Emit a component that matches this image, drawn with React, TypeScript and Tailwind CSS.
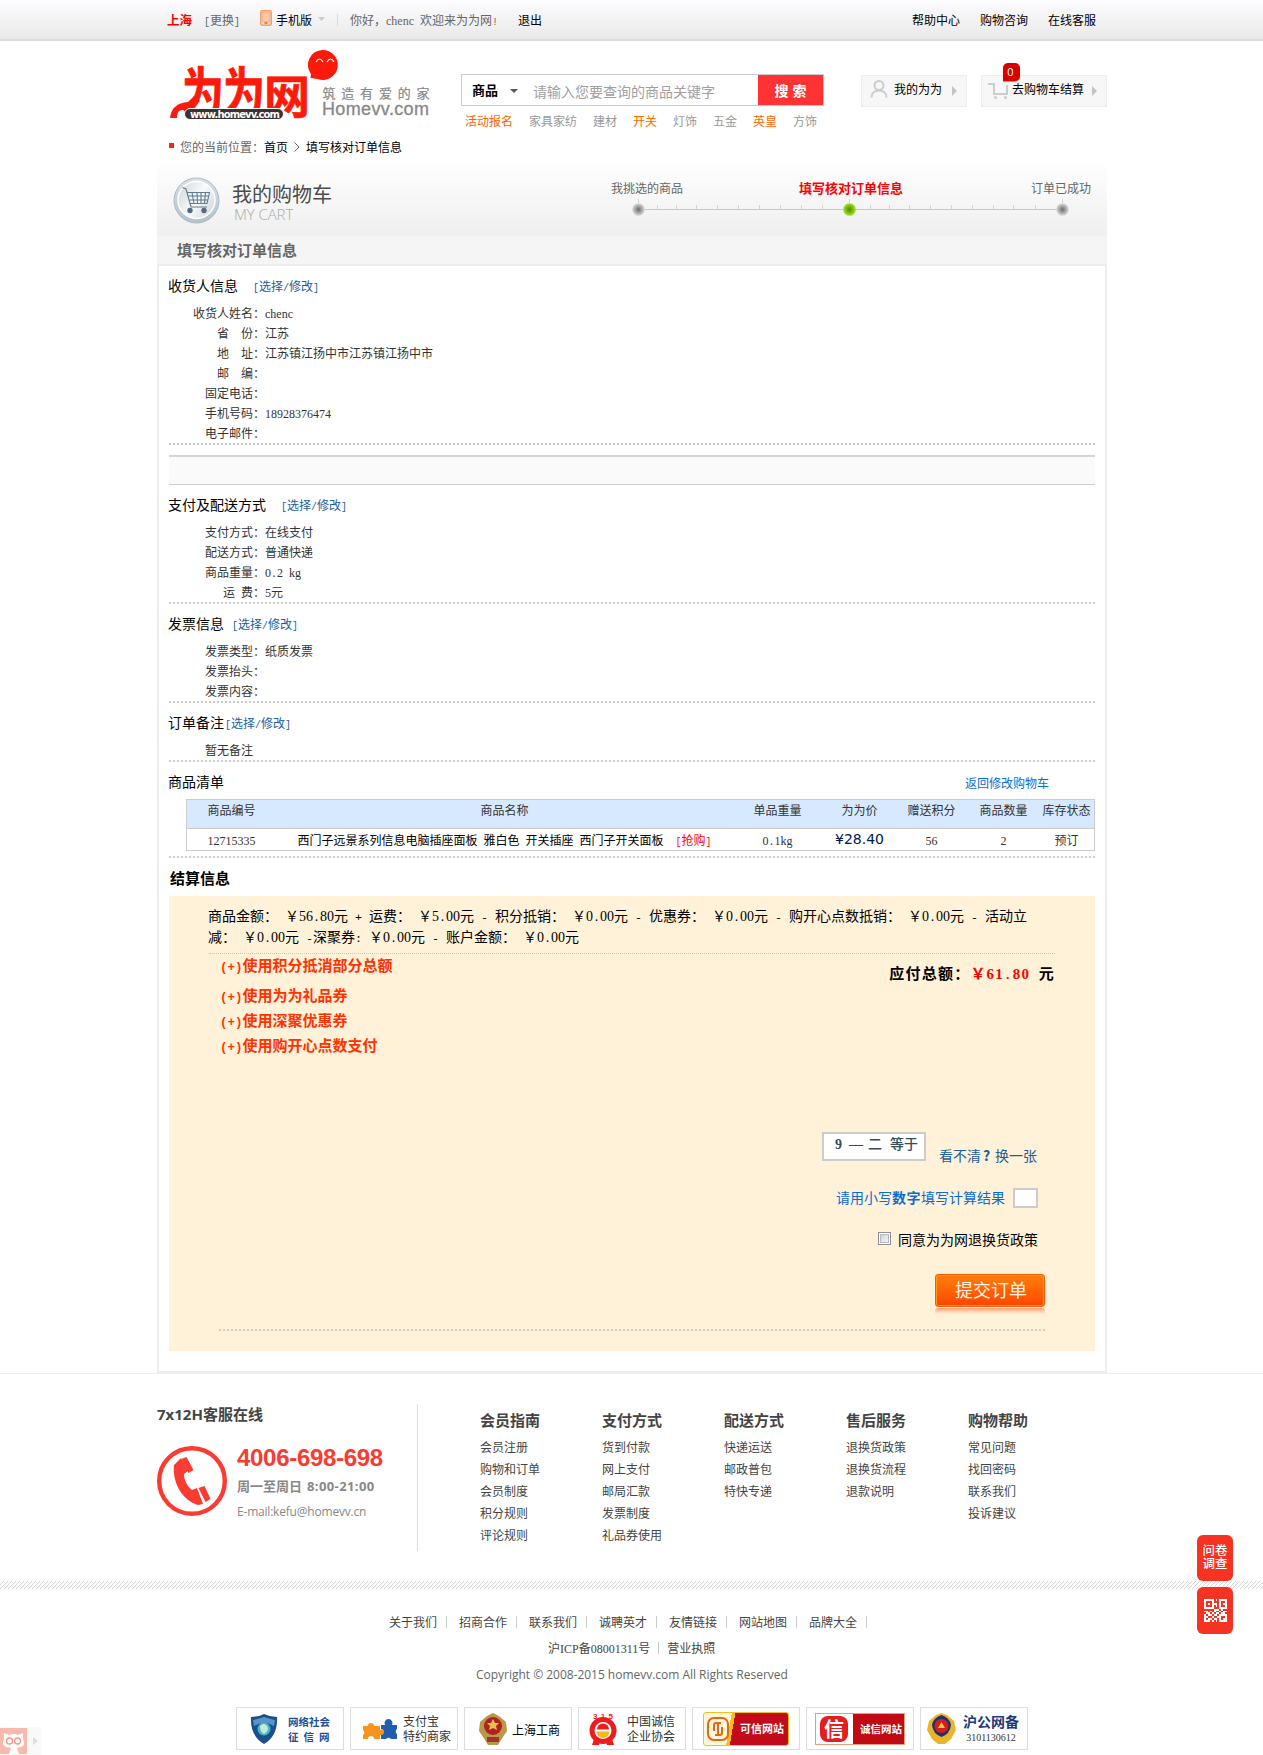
import React from "react";

const CJK = "font-['Noto_Sans_CJK_SC',sans-serif]";

/* Half-width characters take about half an em, full-width ones a whole em. */
function T({ children }: { children: string }) {
  const runs = children.match(/[0-9A-Za-z]+|[^0-9A-Za-z\u0080-\uffff]+|[\u0080-\uffff]+/g) || [];
  return (
    <span className="whitespace-pre">
      {runs.map((r, i) =>
        /^[0-9A-Za-z]/.test(r) ? (
          <span key={i} className="font-['Liberation_Serif',serif] leading-none">{r}</span>
        ) : /^[\u0080-\uffff]/.test(r) ? (
          <React.Fragment key={i}>{r}</React.Fragment>
        ) : (
          <span key={i} className="font-['Liberation_Mono',monospace] text-[0.8333em] leading-none">{r}</span>
        )
      )}
    </span>
  );
}

function TopBar() {
  return (
    <div className="flex h-[41px] items-center border-b-2 border-[#dcdcdf] bg-gradient-to-b from-[#fdfcfe] to-[#e9e9ea] pl-[167px] text-[#666]">
      <b className="w-[37px] text-[12.5px] text-[#f00]">上海</b>
      <span className="w-[56px]"><T>[更换]</T></span>
      <svg width="12" height="16" viewBox="0 0 12 16" className="mb-1">
        <rect x="0.75" y="0.75" width="10.5" height="14.5" rx="1.5" fill="#fcd9c0" stroke="#f5a06c" strokeWidth="1.5" />
        <rect x="2.5" y="2.5" width="7" height="9" fill="#fbc9a8" stroke="#f5a06c" strokeWidth="0.6" />
        <rect x="4.5" y="12" width="3" height="2" fill="#f08040" />
      </svg>
      <span className="ml-[4px] text-black">手机版</span>
      <svg width="7" height="4" className="mb-[2px] ml-[6px]"><path d="M0 0H7L3.5 4Z" fill="#ccc" /></svg>
      <i className="ml-[12px] h-3 w-px bg-[#d5dcde]" />
      <span className="ml-[12px] w-[168px]"><T>你好，chenc 欢迎来为为网!</T></span>
      <span className="w-[394px] text-black">退出</span>
      <div className="flex gap-5 text-black">
        <span>帮助中心</span>
        <span>购物咨询</span>
        <span>在线客服</span>
      </div>
    </div>
  );
}

function Logo() {
  return (
    <svg width="265" height="76" viewBox="168 48 265 76">
      <g fill="#fd1a0b" stroke="#fd1a0b" strokeWidth="0.700" fontWeight="700" fontFamily="'Noto Sans CJK SC',sans-serif">
        <text transform="translate(182 111) scale(1 1.25)" fontSize="42" textLength="83">为为</text>
        <text x="264" y="113" fontSize="46">网</text>
      </g>
      <path d="M170 118c1-10 7-15 18-16l6-6 6 5-9 9h-8c-5 0-6 3-6 8z" fill="#fd1a0b" />
      <rect x="184.500" y="108.500" width="99" height="11" rx="5.500" fill="#3b3232" stroke="#fff" />
      <text x="190" y="117.500" fill="#fff" fontSize="10" fontWeight="700" textLength="90" fontFamily="'DejaVu Sans',sans-serif">www.homevv.com</text>
      <path d="M322.500 50a15 15 0 1 1-5 29l-7 -1 0.500-4A15 15 0 0 1 322.500 50z" fill="#fd1a0b" />
      <path d="M316 62q3.500-6 7 0M327 62q3.500-6 7 0" fill="none" stroke="#fff" strokeWidth="1.200" />
      <text x="322.500" y="97.500" fill="#888" fontSize="13" textLength="107" stroke="#888" strokeWidth="0.200" fontFamily="'Noto Sans CJK SC',sans-serif">筑造有爱的家</text>
      <text x="322" y="114.500" fill="#888" stroke="#888" strokeWidth="0.300" fontSize="18" textLength="107" fontFamily="'Liberation Sans',sans-serif">Homevv.com</text>
    </svg>
  );
}

const hot: [string, boolean][] = [
  ["活动报名", true], ["家具家纺", false], ["建材", false], ["开关", true],
  ["灯饰", false], ["五金", false], ["英皇", true], ["方饰", false],
];

function Header() {
  return (
    <div className="flex h-[89px] items-start pl-[168px]">
      <div className="mt-[7px] w-[293px]"><Logo /></div>
      <div className="mt-[33px] w-[363px]">
        <div className="flex h-8 items-center border border-[#ccc]">
          <b className="ml-[10px] w-[38px] text-[13px] text-black">商品</b>
          <svg width="8" height="4" className="mt-px"><path d="M0 0H8L4 4Z" fill="#555" /></svg>
          <span className="ml-[15px] mt-[2px] flex-1 text-[14px] text-[#a0a0a0]">请输入您要查询的商品关键字</span>
          <b className="flex h-[30px] w-[65px] items-center justify-center bg-[#f33] text-[14px] text-white">搜<span className="w-1" />索</b>
        </div>
        <div className="ml-[4px] mt-[5px] flex h-5 items-center gap-4">
          {hot.map(([t, on]) => (
            <span key={t} className={on ? "text-[#f60]" : "text-[#999]"}>{t}</span>
          ))}
        </div>
      </div>
      <div className="ml-[37px] mt-[34px] flex h-8 w-[106px] items-center border border-[#eee] bg-[#f7f7f7] text-black">
        <svg width="18" height="18" viewBox="0 0 18 18" fill="none" stroke="#ccc" strokeWidth="2" className="mb-1 ml-2">
          <circle cx="9" cy="5.500" r="4.500" />
          <path d="M1.500 17.500C1.500 13 5 10.500 9 10.500S16.500 13 16.500 17.500" />
        </svg>
        <span className="-mt-1 ml-[6px]">我的为为</span>
        <svg width="5" height="10" className="ml-[10px]"><path d="M0 0L5 5L0 10Z" fill="#c4c4c4" /></svg>
      </div>
      <div className="relative ml-[14px] mt-[34px] flex h-8 w-[126px] items-center border border-[#eee] bg-[#f7f7f7] text-black">
        <svg width="21" height="17" viewBox="0 0 21 17" fill="none" stroke="#ccc" strokeWidth="2" className="mb-px ml-[6px]">
          <path d="M0 2H6V12H19V3" />
          <circle cx="7.500" cy="15.500" r="1.500" fill="#ccc" stroke="none" />
          <circle cx="17.500" cy="15.500" r="1.500" fill="#ccc" stroke="none" />
        </svg>
        <span className="-mt-1 ml-[3px]">去购物车结算</span>
        <svg width="5" height="10" className="ml-[8px]"><path d="M0 0L5 5L0 10Z" fill="#c4c4c4" /></svg>
        <span className="absolute left-[21px] top-[-13px] flex h-[18px] w-[17px] items-center justify-center rounded-[5px] rounded-bl-none bg-[#d90000] pr-[2px] font-['Open_Sans',sans-serif] text-[11px] text-white shadow-[0_1px_1px_#999]">0</span>
      </div>
    </div>
  );
}

function Crumbs() {
  return (
    <div className="flex h-[30px] items-center pl-[169px] pt-[3px] text-[#666]">
      <i className="mb-[3px] h-[5px] w-[5px] bg-[#f3290f]" />
      <span className="ml-[6px]">您的当前位置：</span>
      <span className="text-black">首页</span>
      <svg width="6" height="10" fill="none" stroke="#666" className="mx-[6px]"><path d="M0.500 0.500L5 5L0.500 9.500" /></svg>
      <span className="text-black">填写核对订单信息</span>
    </div>
  );
}

const ticks = [657, 676, 696, 717, 738, 759, 780, 801, 822, 870, 889, 909, 930, 951, 972, 993, 1013, 1035];

function CartHeader() {
  return (
    <>
      <div className="flex h-[76px] bg-gradient-to-b from-white to-[#efefef] pl-[14px]">
        <svg width="50" height="50" viewBox="0 0 50 50" className="mt-[15px]">
          <defs>
            <linearGradient id="ring" x1="0" y1="0" x2="0" y2="1">
              <stop offset="0" stopColor="#dbe3e8" /><stop offset="1" stopColor="#b4c2cb" />
            </linearGradient>
            <linearGradient id="disc" x1="0" y1="0" x2="1" y2="0.600">
              <stop offset="0" stopColor="#cfd4d7" /><stop offset="0.600" stopColor="#f8fafa" /><stop offset="1" stopColor="#d8dee2" />
            </linearGradient>
          </defs>
          <circle cx="25.500" cy="25.500" r="22.500" fill="url(#ring)" stroke="#a9bac4" />
          <circle cx="25.500" cy="25" r="18.500" fill="url(#disc)" stroke="#fff" strokeWidth="1.500" />
          <g fill="none" stroke="#5f7d90" strokeWidth="1.100">
            <path d="M11.500 12.500L15 14L20 32H36M16 17.500H38.500L36 28.500H18.500M17 21H38M18 25H37M21 17.500L23 28.500M26 17.500L26.500 28.500M30 17.500V28.500M34.500 17.500L33.500 28.500" />
          </g>
          <circle cx="19" cy="35.500" r="2.700" fill="#4f6c80" /><circle cx="33" cy="35.500" r="2.700" fill="#4f6c80" />
        </svg>
        <div className="ml-[10px] mt-[20px] w-[380px]">
          <div className="h-[26px] pl-px text-[20px] leading-[27px] text-[#4c4c4c]">我的购物车</div>
          <div className="ml-[3px] h-4 font-['Open_Sans',sans-serif] text-[15px] font-light leading-4 tracking-[-0.100px] text-[#aaa]">MY CART</div>
        </div>
        <div className="mt-[18px]">
          <div className="flex h-5 items-center text-[#666]">
            <span className="w-[188px]">我挑选的商品</span>
            <b className="w-[232px] text-[13px] text-[#f00]">填写核对订单信息</b>
            <span>订单已成功</span>
          </div>
          <svg width="445" height="18" viewBox="628 198 445 18" className="ml-[17px]">
            <defs>
              <radialGradient id="gd"><stop offset="0" stopColor="#6b6b6b" /><stop offset="1" stopColor="#dcdcdc" /></radialGradient>
              <radialGradient id="gg"><stop offset="0" stopColor="#4a8a0a" /><stop offset="0.500" stopColor="#74b80f" /><stop offset="1" stopColor="#a6e02c" /></radialGradient>
            </defs>
            <rect x="638" y="209" width="424" height="1" fill="#c6c6c6" />
            {ticks.map((x) => <rect key={x} x={x} y="205" width="1" height="4" fill="#d4d4d4" />)}
            {[638, 849, 1062].map((x) => <rect key={x} x={x} y="199" width="1" height="4" fill="#d4d4d4" />)}
            <circle cx="638.500" cy="209.500" r="6.300" fill="url(#gd)" />
            <circle cx="849.500" cy="209.500" r="6.300" fill="url(#gg)" />
            <circle cx="1062.500" cy="209.500" r="6.300" fill="url(#gd)" />
          </svg>
        </div>
      </div>
      <div className="flex h-[28px] items-center bg-[#f5f5f5] pb-px pl-[20px] text-[15px] font-bold text-[#666]">填写核对订单信息</div>
    </>
  );
}

const EDIT = "[选择/修改]";

function Title({ title, gap }: { title: string; gap: string }) {
  return (
    <div className="flex h-[37px] items-center">
      <span className="-ml-px text-[14px] text-black">{title}</span>
      <span className={"mt-[2px] text-[#1a5e9c] " + gap}><T>{EDIT}</T></span>
    </div>
  );
}

function Section({ title, gap, rows }: { title: string; gap: string; rows: [string, string][] }) {
  return (
    <div className="border-b-2 border-dotted border-[#ccc]">
      <Title title={title} gap={gap} />
      {rows.map(([k, v]) => (
        <div key={k} className="flex h-5 items-center text-[#333]">
          <span className="w-[96px] text-right"><T>{k}</T></span>
          <span><T>{v}</T></span>
        </div>
      ))}
    </div>
  );
}

const GRID = "grid grid-cols-[89px_457px_89px_75px_69px_75px_53px] text-center";

function Products() {
  return (
    <div className="border-b-2 border-dotted border-[#ccc] pb-[5px]">
      <div className="flex h-[37px] items-center justify-between">
        <span className="-ml-px text-[14px] text-black">商品清单</span>
        <span className="mr-[46px] mt-[4px] text-[#0a6cd6]">返回修改购物车</span>
      </div>
      <div className="ml-[17px] border border-[#ccc] text-[#333]">
        <div className={GRID + " h-[29px] border-b border-[#ccc] bg-[#d7e9ff] leading-[20px]"}>
          <span>商品编号</span><span>商品名称</span><span>单品重量</span><span>为为价</span>
          <span>赠送积分</span><span>商品数量</span><span className="-ml-[2px]">库存状态</span>
        </div>
        <div className={GRID + " h-[21px] leading-[21px]"}>
          <span><T>12715335</T></span>
          <span className="text-black">
            <T>西门子远景系列信息电脑插座面板 雅白色 开关插座 西门子开关面板</T>
            <span className="ml-3 text-[#f00]"><T>[抢购]</T></span>
          </span>
          <span><T>0.1kg</T></span>
          <span className="font-['DejaVu_Sans',sans-serif] text-[14px] leading-[20px] text-[#001a4d]">¥28.40</span>
          <span><T>56</T></span><span><T>2</T></span><span className="-ml-[2px]">预订</span>
        </div>
      </div>
    </div>
  );
}

function Settlement() {
  return (
    <>
      <div className="flex h-[38px] items-center pl-px pt-px text-[15px] font-bold text-black">结算信息</div>
      <div className="h-[455px] bg-[#fff2d8] text-[14px] text-black">
        <div className="ml-10 mr-10 h-[58px] border-b border-dotted border-[#d2c6a6] pt-[9px] leading-[21px]">
          <div className="-ml-px"><T>商品金额： ￥56.80元 + 运费： ￥5.00元 - 积分抵销： ￥0.00元 - 优惠券： ￥0.00元 - 购开心点数抵销： ￥0.00元 - 活动立</T></div>
          <div className="-ml-px"><T>减： ￥0.00元 -深聚券: ￥0.00元 - 账户金额： ￥0.00元</T></div>
        </div>
        <div className="flex h-[178px] items-start justify-between pl-[51px] pr-[40px]">
          <div className="-mt-[2px] text-[15px] font-bold leading-[25px] text-[#f30]">
            <div className="mb-[5px]"><T>(+)使用积分抵消部分总额</T></div>
            <div><T>(+)使用为为礼品券</T></div>
            <div><T>(+)使用深聚优惠券</T></div>
            <div><T>(+)使用购开心点数支付</T></div>
          </div>
          <div className="mt-[9px] whitespace-pre text-[15px] font-bold leading-5 tracking-[1.200px]">
            应付总额：<span className="text-[#f00]"><T>￥61.80</T></span><T> 元</T>
          </div>
        </div>
        <div className="mr-[58px] flex h-[33px] items-end justify-end">
          <div className="mb-1 flex h-[29px] w-[104px] whitespace-pre border-2 border-[#ccc] bg-white pl-[11px] font-['Liberation_Serif','Noto_Sans_CJK_SC',serif] text-[14px] font-bold leading-[22px] text-[#344e58]">
            <span className="w-[14px]">9</span><span className="w-[19px]">—</span><span className="w-[22px] font-medium">二</span><span className="font-medium">等于</span>
          </div>
          <span className="ml-[13px] h-5 leading-[20px] text-[#1a5e9c]">看不清<b className="inline-block w-[14px] pl-[2px]">?</b>换一张</span>
        </div>
        <div className="mr-[57px] mt-[23px] flex h-5 items-center justify-end text-[#0a6cd6]">
          <span className="-mt-[2px]">请用小写<b className="tracking-[0.5px]">数字</b>填写计算结果</span>
          <span className="ml-2 h-5 w-[25px] border-2 border-[#ccc] bg-white" />
        </div>
        <div className="mr-[57px] mt-[21px] flex h-5 items-center justify-end">
          <span className="mr-[7px] mb-[2px] h-[13px] w-[13px] border border-[#8e8f8f] bg-white p-[1px]">
            <span className="block h-full w-full border border-[#b5bac0] bg-gradient-to-br from-[#cfd3d8] to-[#f6f6f6]" />
          </span>
          <span>同意为为网退换货政策</span>
        </div>
        <div className="ml-[50px] mr-[50px] mt-[25px] flex h-[57px] flex-col items-end border-b-2 border-dotted border-[#ccc]">
          <div className="flex h-[33px] w-[110px] items-center justify-center rounded-[3px] border border-[#ff5a00] bg-gradient-to-b from-[#ff7d0c] to-[#ff4300] pb-[3px] pl-[2px] text-[18px] text-[#fff3e6] shadow-[inset_0_0_0_1px_#ff9a1c]">提交订单</div>
          <div className="mt-px h-[6px] w-[110px] rounded-t-[3px] bg-gradient-to-b from-[#ff7d4b] to-[#fff2d8] opacity-70" />
        </div>
      </div>
    </>
  );
}

const help: [string, string[]][] = [
  ["会员指南", ["会员注册", "购物和订单", "会员制度", "积分规则", "评论规则"]],
  ["支付方式", ["货到付款", "网上支付", "邮局汇款", "发票制度", "礼品券使用"]],
  ["配送方式", ["快递运送", "邮政普包", "特快专递"]],
  ["售后服务", ["退换货政策", "退换货流程", "退款说明"]],
  ["购物帮助", ["常见问题", "找回密码", "联系我们", "投诉建议"]],
];

function Help() {
  return (
    <div className="flex h-[208px] border-t border-[#eee] pl-[157px] pt-[30px] text-[#444]">
      <div className="h-[147px] w-[261px] border-r border-[#ddd]">
        <b className="block h-[22px] text-[15px] leading-[20px]"><span className="font-['Open_Sans',sans-serif] text-[15px]">7x12H</span>客服在线</b>
        <div className="mt-5 flex">
          <svg width="70" height="70" viewBox="0 0 70 70">
            <circle cx="35" cy="35" r="32.800" fill="none" stroke="#f93b32" strokeWidth="4.400" />
            <path d="M17 19c-2 18 9 36 24 40l5-1-6-16-5 2c-5-4-8-10-8-16l4-3-7-13z" fill="#f93b32" />
            <path d="M24.500 13l5-2 7 13-5 3zM41.500 42l6-2 6 13-5 3z" fill="#f93b32" />
          </svg>
          <div className="ml-[10px]">
            <div className="h-[26px] font-['Liberation_Sans',sans-serif] text-[24px] font-bold leading-[24px] tracking-[-0.3px] text-[#f93b32]">4006-698-698</div>
            <div className="mt-1 h-5 text-[13px] font-bold leading-[20px] text-[#888]">周一至周日<span className="ml-[5px] font-['Open_Sans',sans-serif] text-[13px] tracking-[0.400px]">8:00-21:00</span></div>
            <div className="mt-[6px] h-5 font-['Open_Sans',sans-serif] text-[12px] leading-[20px] tracking-[-0.200px] text-[#888]">E-mail:kefu@homevv.cn</div>
          </div>
        </div>
      </div>
      <div className="ml-[61px] flex pt-[5px]">
        {help.map(([h, items]) => (
          <div key={h} className="w-[122px] pl-px">
            <b className="block h-[26px] text-[15px] leading-[21px]">{h}</b>
            {items.map((t) => <div key={t} className="h-[22px] leading-[24px]">{t}</div>)}
          </div>
        ))}
      </div>
    </div>
  );
}

const badge = "flex h-[43px] w-[108px] items-center border border-[#ddd] bg-white";

function Badges() {
  return (
    <div className="mt-[22px] flex gap-[6px] pl-[236px] leading-[15px]">
      <div className={badge}>
        <svg width="28" height="30" viewBox="0 0 28 30" className="ml-[13px]">
          <path d="M1 3Q8 3 14 0Q20 3 27 3Q28 22 14 30Q0 22 1 3Z" fill="#1b4f8c" />
          <path d="M3 6Q9 5 14 3Q20 5 25 6L24 12Q14 6 4 12Z" fill="#5b93c8" />
          <circle cx="14" cy="15" r="6.500" fill="#46b5d6" /><path d="M10 12q4-4 7 0t-3 8q-4-2-4-8z" fill="#c7ecc7" />
        </svg>
        <div className="ml-[10px] text-[10.500px] font-bold text-[#1d4f94]"><div>网络社会</div><div className="tracking-[5px]">征信网</div></div>
      </div>
      <div className={badge}>
        <svg width="36" height="22" viewBox="0 0 36 22" className="ml-[11px]">
          <path d="M1 8h5a3 3 0 1 1 6 0h6v4a3 3 0 1 1 0 5v4h-6a3 3 0 0 0-6 0H1v-4a3 3 0 0 0 0-5z" fill="#f7941d" />
          <path d="M19 7h4a4 4 0 1 1 7 0h5v4a3 3 0 0 0 0 5v5h-6a3 3 0 0 0-5 0h-5v-4a3 3 0 0 0 0-6z" fill="#1d5fae" />
        </svg>
        <div className="-mt-px ml-[5px] text-[12px] text-[#333]"><div>支付宝</div><div>特约商家</div></div>
      </div>
      <div className={badge}>
        <svg width="28" height="32" viewBox="0 0 28 32" className="ml-[14px]">
          <path d="M14 0L20 3 27 9 28 18 22 27 19 32H9L6 27 0 18 1 9 8 3Z" fill="#b8984a" />
          <circle cx="14" cy="13" r="9" fill="#b3201f" /><path d="M14 6l2 4h4l-3 3 1 4-4-2-4 2 1-4-3-3h4z" fill="#e6c34e" />
          <path d="M8 24h12v5H8z" fill="#a4342a" />
        </svg>
        <div className="ml-[5px] mt-[2px] text-[12px] text-black">上海工商</div>
      </div>
      <div className={badge}>
        <svg width="30" height="34" viewBox="0 0 30 34" className="ml-[9px]">
          <circle cx="15" cy="18.500" r="11" fill="none" stroke="#ee1c1c" strokeWidth="5" />
          <path d="M6 27l-2 6h7l1-3M24 27l2 6h-7l-1-3" fill="#ee1c1c" />
          <path d="M8.500 19.500h13a6.500 6.500 0 0 1-13 0z" fill="#f5b71c" /><path d="M9 17.500a6 6 0 0 1 12 0z" fill="#ee1c1c" />
          <text x="5" y="6.500" fontSize="8" textLength="20" fontWeight="700" fill="#ee1c1c" fontFamily="'Liberation Sans',sans-serif">315</text>
        </svg>
        <div className="-mt-px ml-[9px] text-[12px] text-[#333]"><div>中国诚信</div><div>企业协会</div></div>
      </div>
      <div className={badge + " justify-center"}>
        <div className="flex h-[34px] w-[86px] items-center justify-between rounded-[3px] border border-[#f0c020] bg-[linear-gradient(100deg,#fff6d8_0_31%,#f0c020_31%_35%,#c20a1a_35%)] pl-[3px] pr-[4px]">
          <svg width="22" height="24" viewBox="0 0 22 24" fill="none" stroke="#e0681a" strokeWidth="2">
            <rect x="1" y="1" width="20" height="22" rx="6" />
            <path d="M14 6H9q-2 0-2 2v6M8 18h5q2 0 2-2v-6M11 6v12" />
          </svg>
          <b className="text-[11px] text-white">可信网站</b>
        </div>
      </div>
      <div className={badge + " justify-center"}>
        <div className="flex h-[32px] w-[90px] items-center justify-between border border-[#e2a080] bg-[linear-gradient(90deg,#fff_0_42%,#c00a14_42%)] pl-[4px] pr-[2px]">
          <span className="flex h-[26px] w-[28px] items-center justify-center rounded-[8px] bg-[#e51d1d] text-[20px] font-bold text-white">信</span>
          <b className="text-[10.500px] text-white">诚信网站</b>
        </div>
      </div>
      <div className={badge}>
        <svg width="29" height="31" viewBox="0 0 29 31" className="ml-[6px]">
          <path d="M14.500 0L20 2 27 8 29 17 24 26 18 31H11L5 26 0 17 2 8 9 2Z" fill="#e9b52c" />
          <path d="M14.500 2Q23 5 24 12Q23 21 14.500 24Q6 21 5 12Q6 5 14.500 2Z" fill="#23306d" />
          <circle cx="14.500" cy="13" r="7" fill="#d11f1f" /><path d="M11 15h7l-3.500-6z" fill="#f0c83a" />
        </svg>
        <div className="ml-[7px] mt-px text-center leading-[14px]"><b className="block text-[14px] leading-[15px] text-[#1d3a7a]">沪公网备</b><span className="font-['Liberation_Serif',serif] text-[10px] text-[#333]">3101130612</span></div>
      </div>
    </div>
  );
}

const qr = ["111110101111", "100010001001", "101011101011", "100010101001", "111110001111", "000001110100", "110101001011", "011010110110", "101101101111", "110010011001", "101101101011", "111010101111"];

function SideTools() {
  return (
    <>
      <div className="absolute left-[1197px] top-[1535px] flex w-9 flex-col gap-[6px]">
        <div className="flex h-[46px] items-center justify-center rounded-[6px] bg-[#f63222] pb-[4px] text-[12.500px] font-medium leading-[13px] text-white"><span>问卷<br />调查</span></div>
        <div className="flex h-[47px] items-center justify-center rounded-[6px] bg-[#f63222]">
          <svg width="23" height="23" viewBox="0 0 12 12" fill="#fff" shapeRendering="crispEdges">
            {qr.map((row, y) => row.split("").map((c, x) => c === "1" && <rect key={x + "-" + y} x={x} y={y} width="1" height="1" />))}
          </svg>
        </div>
      </div>
      <div className="absolute left-0 top-[1727px] flex h-7 w-[42px] items-center bg-[#f9f9f9]">
        <svg width="27" height="26" viewBox="0 0 27 26">
          <rect width="27" height="26" fill="#f9b9ad" />
          <path d="M4 5l5 2q5-2 9 0l5-2v6q3 6-2 8l-4 1 2 6H9l2-6-5-1q-5-3-2-8z" fill="#fff" />
          <circle cx="9.500" cy="13" r="3" fill="none" stroke="#f5988a" strokeWidth="1.300" /><circle cx="17.500" cy="13" r="3" fill="none" stroke="#f5988a" strokeWidth="1.300" />
        </svg>
        <svg width="5" height="8" className="ml-[6px]"><path d="M0 0L5 4L0 8Z" fill="#ddd" /></svg>
      </div>
    </>
  );
}

function Hatch() {
  return (
    <svg width="1263" height="8" className="block">
      <defs>
        <pattern id="hatch" width="4" height="4" patternUnits="userSpaceOnUse">
          <path d="M-1 1L1 -1M0 4L4 0M3 5L5 3" stroke="#d6d6d6" strokeWidth="1" />
        </pattern>
      </defs>
      <rect width="1263" height="8" fill="url(#hatch)" />
    </svg>
  );
}

const links = ["关于我们", "招商合作", "联系我们", "诚聘英才", "友情链接", "网站地图", "品牌大全"];

export default function App() {
  return (
    <div className={"relative h-[1755px] w-[1263px] overflow-hidden bg-white text-[12px] leading-[20px] " + CJK}>
      <TopBar />
      <Header />
      <Crumbs />
      <div className="ml-[157px] w-[950px]">
        <CartHeader />
        <div className="h-[1109px] border-2 border-[#ededed] px-[10px]">
          <Section title="收货人信息" gap="ml-[15px]" rows={[["收货人姓名：", "chenc"], ["省　份：", "江苏"], ["地　址：", "江苏镇江扬中市江苏镇江扬中市"], ["邮　编：", ""], ["固定电话：", ""], ["手机号码：", "18928376474"], ["电子邮件：", ""]]} />
          <div className="mt-[10px] h-[30px] border-b border-t-2 border-b-[#ccc] border-t-[#d3d6d3] bg-[#fafafa]" />
          <Section title="支付及配送方式" gap="ml-[15px]" rows={[["支付方式：", "在线支付"], ["配送方式：", "普通快递"], ["商品重量：", "0.2 kg"], ["运 费：", "5元"]]} />
          <Section title="发票信息" gap="ml-[8px]" rows={[["发票类型：", "纸质发票"], ["发票抬头：", ""], ["发票内容：", ""]]} />
          <div className="border-b-2 border-dotted border-[#ccc]">
            <Title title="订单备注" gap="ml-px" />
            <div className="h-5 pl-[36px] text-[#333]">暂无备注</div>
          </div>
          <Products />
          <Settlement />
        </div>
      </div>
      <Help />
      <Hatch />
      <div className="mt-[23px] flex h-5 items-center pl-[389px] text-[#444]">
        {links.map((l) => (
          <span key={l} className="flex w-[70px] items-center">{l}<i className="ml-[9px] h-3 w-px bg-[#ccc]" /></span>
        ))}
      </div>
      <div className="mt-[6px] flex h-5 items-center pl-[548px] text-[#444]">
        <T>沪ICP备08001311号</T><i className="ml-[8px] mr-[8px] h-3 w-px bg-[#ccc]" />营业执照
      </div>
      <div className="mt-[7px] h-5 pl-[476px] font-['Open_Sans',sans-serif] text-[12px] tracking-[-0.020px] text-[#666]">Copyright © 2008-2015 homevv.com All Rights Reserved</div>
      <Badges />
      <SideTools />
    </div>
  );
}
